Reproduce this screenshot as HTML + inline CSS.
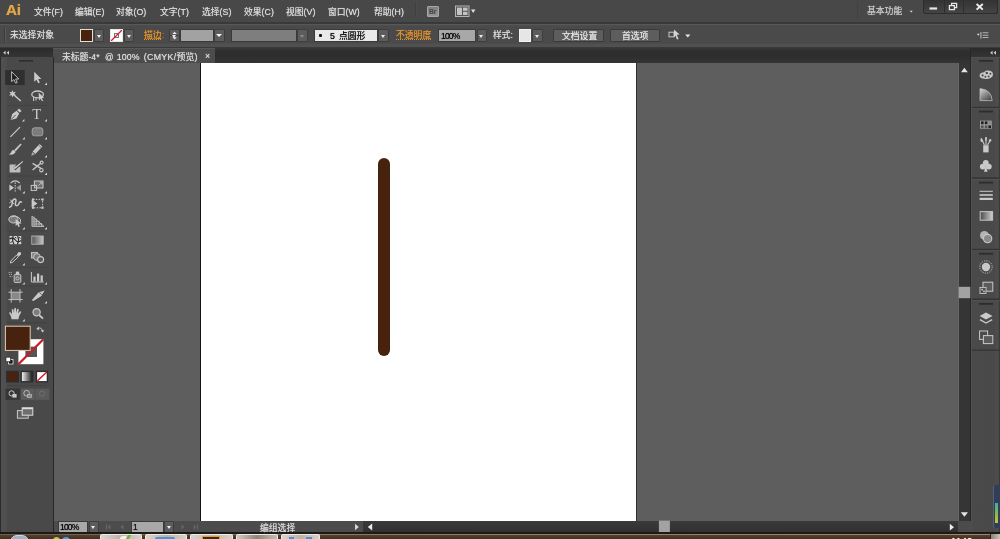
<!DOCTYPE html>
<html lang="zh-CN">
<head>
<meta charset="utf-8">
<title>未标题-4* @ 100% (CMYK/预览)</title>
<style>
*{box-sizing:border-box;margin:0;padding:0}
html,body{width:1000px;height:539px;overflow:hidden;background:#343434}
body{position:relative;font-family:"Liberation Sans","Noto Sans CJK SC",sans-serif;font-size:8.8px;color:#d8d8d8;line-height:1}
.a{position:absolute}
.t{position:absolute;white-space:nowrap;line-height:12px;height:12px;will-change:transform;text-shadow:0 0 0.7px currentColor}
#menubar{left:0;top:0;width:1000px;height:22px;background:#484848}
#ctrl{left:0;top:22px;width:1000px;height:24.8px;background:linear-gradient(#3a3a3a 0,#393939 1.6px,#585858 1.9px,#575757 3.2px,#4a4a4a 3.6px,#4a4a4a 21.4px,#515151 21.8px,#505050 24.8px)}
#tabbar{left:0;top:46.8px;width:1000px;height:15.7px;background:linear-gradient(#3b3b3b 0,#2f2f2f 4px,#2d2d2d 8px,#343434 16px)}
#tab{left:53.4px;top:48px;width:161.4px;height:14.5px;background:#4c4c4c;border-top:1px solid #585858}
#tools{left:0;top:56.5px;width:53.8px;height:477px;background:linear-gradient(90deg,#2a2a2a 0,#2c2c2c 0.9px,#505050 1.3px,#4e4e4e 6.8px,#494949 7.4px);border-right:1.7px solid #282828}
#canvas{left:53px;top:62.5px;width:905px;height:458px;background:#5e5e5e}
#art{left:199.9px;top:62.5px;width:437.2px;height:458px;background:#fff;border-left:1.1px solid #141414;border-right:1.3px solid #303030}
#vscroll{left:957.6px;top:62.5px;width:13.4px;height:458px;background:#353535;border-left:0.8px solid #666}
#rpanel{left:970.4px;top:48px;width:29.6px;height:486px;background:linear-gradient(90deg,#515151 0,#4a4a4a 1.5px,#494949 24px,#4d4d4d 25px,#4c4c4c 27.4px,#3a3a3a 28px);border-left:1.5px solid #272727}
#status{left:53.8px;top:520.5px;width:916.6px;height:12px;background:#4c4c4c}
#hscroll{left:363px;top:520.5px;width:595.4px;height:12px;background:linear-gradient(#3a3a3a,#303030)}
#taskbar{left:0;top:532px;width:1000px;height:7px;background:#3a2e24}
.or{color:#e0902c}
.fld{position:absolute;background:#a3a3a3;border:1px solid #3a3a3a}
.dd{position:absolute;background:#5c5c5c;border:1px solid #3d3d3d;border-radius:1px}
.dd:after{content:"";position:absolute;left:50%;top:50%;margin:-0.8px 0 0 -2.5px;border:2.5px solid transparent;border-top:3px solid #ececec;border-bottom:0}
.dd.dim:after{border-top-color:#8a8a8a}
.dd.big:after{margin:-1.2px 0 0 -3px;border-width:3px;border-top-width:3.6px;border-top-color:#f4f4f4}
.tb{top:534.2px;height:6px;background:linear-gradient(90deg,#dad6ce,#b9b2a6 50%,#d6d2ca);border:1px solid #efece6;border-bottom:0;border-radius:2px 2px 0 0}
.btn{position:absolute;background:#5d5d5d;border:1px solid #3a3a3a;border-radius:1px;text-align:center;color:#e4e4e4}
</style>
</head>
<body>
<div class="a" id="menubar"></div>
<div class="a" id="ctrl"></div>
<div class="a" id="tabbar"></div>
<div class="a" id="tab"></div>
<div class="a" id="canvas"></div>
<div class="a" id="art"></div>
<div class="a" id="tools"></div>
<div class="a" id="vscroll"></div>
<div class="a" id="rpanel"></div>
<div class="a" id="status"></div>
<div class="a" id="hscroll"></div>
<div class="a" id="taskbar"></div>


<!-- left toolbar -->
<div class="a" style="left:0;top:48px;width:53px;height:9px;background:linear-gradient(#2b2b2b,#353535)"></div>
<svg class="a" style="left:0;top:48px;will-change:transform" width="53" height="486" viewBox="0 48 53 486">
 <!-- collapse arrows -->
 <path d="M3.2 52.8 L5.6 50.8 L5.6 54.8Z M6.6 52.8 L9 50.8 L9 54.8Z" fill="#cfcfcf"/>
 <!-- grip -->
 <rect x="19" y="60" width="14" height="1.6" fill="#2e2e2e"/>
 <!-- separators -->
 <g stroke="#424242" stroke-width="1">
  <line x1="7" y1="105.5" x2="47" y2="105.5"/><line x1="7" y1="176" x2="47" y2="176"/>
  <line x1="7" y1="231" x2="47" y2="231"/><line x1="7" y1="267.5" x2="47" y2="267.5"/>
  <line x1="7" y1="286" x2="47" y2="286"/><line x1="7" y1="322.7" x2="47" y2="322.7"/>
  <line x1="7" y1="385.5" x2="47" y2="385.5"/>
 </g>
 <!-- row1 -->
 <rect x="5.2" y="70" width="19.5" height="15" fill="#2f2f2f"/>
 <path d="M11.6 71.6 L11.6 81.6 L13.9 79.6 L15.6 83.2 L17.2 82.5 L15.6 79 L18.8 79Z" fill="#1e1e1e" stroke="#c9c9c9" stroke-width="0.9" stroke-linejoin="round"/>
 <path d="M34.2 71.8 L34.2 81.8 L36.5 79.8 L38.2 83.3 L39.8 82.6 L38.2 79.1 L41.4 79.1Z" fill="#c9c9c9"/>
 <path d="M44.6 85 L47.0 85 L47.0 82.6Z" fill="#d6d6d6"/>
 <!-- row2 magic wand / lasso -->
 <path d="M12.4 90 L13.3 92.3 L15.8 91.7 L14.4 93.7 L16 95.6 L13.5 95.3 L12.6 97.6 L11.6 95.3 L9 95.6 L10.8 93.7 L9.2 91.8 L11.6 92.3Z" fill="#c9c9c9"/>
 <line x1="14" y1="95" x2="20.8" y2="101" stroke="#c9c9c9" stroke-width="1.5"/>
 <ellipse cx="37.6" cy="94.4" rx="5.8" ry="3.4" fill="none" stroke="#c9c9c9" stroke-width="1.3"/>
 <path d="M33.6 96.5 L33.6 101 M36 97.6 L36 100.4" stroke="#c9c9c9" stroke-width="1.1"/>
 <path d="M38.6 92.6 L39 100.6 L40.6 98.8 L42 101.2 L43.2 100.5 L41.8 98.2 L44 97.8Z" fill="#c9c9c9"/>
 <!-- row3 pen / T -->
 <path d="M19 108.4 L21.6 111 L19.8 112.6 L17.2 110.2Z" fill="#c9c9c9"/>
 <path d="M16.6 110.8 L19.2 113.4 L16.4 118.4 L10.6 120 L12.2 114Z" fill="#c9c9c9"/>
 <line x1="11" y1="119.6" x2="15.6" y2="115" stroke="#4a4a4a" stroke-width="0.9"/>
 <text x="32.2" y="119.4" font-family="Liberation Serif,serif" font-size="14.6" fill="#c9c9c9">T</text>
 <path d="M22 121.5 L24.4 121.5 L24.4 119.1Z" fill="#d6d6d6"/><path d="M44.6 121.5 L47.0 121.5 L47.0 119.1Z" fill="#d6d6d6"/>
 <!-- row4 line / rounded rect -->
 <line x1="10.4" y1="136.8" x2="20" y2="127.2" stroke="#c9c9c9" stroke-width="1.2"/>
 <rect x="32.2" y="127.8" width="10.6" height="8" rx="2.2" fill="#7c7c7c" stroke="#a2a2a2" stroke-width="1"/>
 <path d="M22.4 139.5 L24.799999999999997 139.5 L24.799999999999997 137.1Z" fill="#d6d6d6"/><path d="M44.6 139.5 L47.0 139.5 L47.0 137.1Z" fill="#d6d6d6"/>
 <!-- row5 brush / pencil -->
 <path d="M20.6 143.6 L21.6 144.6 L15.6 151.4 L14.2 150Z" fill="#c9c9c9"/>
 <path d="M14 150.2 Q15.6 151 15.4 152.6 Q13.6 155.6 8.6 154.2 Q11.4 153.4 11.6 151.2 Q12.4 149.8 14 150.2Z" fill="#c9c9c9"/>
 <path d="M39.6 144 L42.4 146.6 L35.4 154 L32.6 151.4Z" fill="#c9c9c9"/>
 <path d="M32.2 152 L34.8 154.4 L31.2 155.8Z" fill="#a8a8a8"/>
 <line x1="38.6" y1="145.2" x2="41.4" y2="147.8" stroke="#4a4a4a" stroke-width="0.7"/>
 <path d="M44.6 157.5 L47.0 157.5 L47.0 155.1Z" fill="#d6d6d6"/>
 <!-- row6 blob / scissors -->
 <path d="M9.6 164.4 L16.4 164.4 L13 168 L15.4 170.2 L19 167 L20.4 166.6 L20.4 172.4 L9.6 172.4Z" fill="#bdbdbd"/>
 <path d="M22.6 161 L23.2 161.8 L17.4 167 Q15.4 169.8 12.4 168.6 Q14.6 166.4 16.4 166Z" fill="#c9c9c9"/>
 <path d="M32.6 163.4 L41.4 168.6 M32.6 170 L41 163" stroke="#c9c9c9" stroke-width="1.4"/>
 <circle cx="41.4" cy="170.2" r="1.7" fill="none" stroke="#c9c9c9" stroke-width="1.1"/>
 <circle cx="41.6" cy="162.6" r="1.5" fill="none" stroke="#c9c9c9" stroke-width="1.1"/>
 <path d="M44.6 175 L47.0 175 L47.0 172.6Z" fill="#d6d6d6"/>
 <!-- row7 reflect / scale -->
 <path d="M9.4 184.6 L14 187.8 L9.4 191Z" fill="#c9c9c9"/>
 <path d="M21 184.6 L16.4 187.8 L21 191Z" fill="#9a9a9a"/>
 <line x1="15.2" y1="182.4" x2="15.2" y2="191.6" stroke="#c9c9c9" stroke-width="1" stroke-dasharray="1.6 1"/>
 <path d="M10.6 183.2 Q15.2 178.6 19.8 183.2" fill="none" stroke="#c9c9c9" stroke-width="1.1"/>
 <rect x="34.4" y="181" width="8.6" height="7" fill="#6e6e6e" stroke="#c9c9c9" stroke-width="1"/>
 <rect x="31.2" y="185.4" width="5.4" height="5" fill="none" stroke="#c9c9c9" stroke-width="1"/>
 <path d="M38.6 185.6 L41.8 182.4 M39.6 182.2 L42 182.2 L42 184.6" fill="none" stroke="#c9c9c9" stroke-width="0.9"/>
 <path d="M22.4 193.5 L24.799999999999997 193.5 L24.799999999999997 191.1Z" fill="#d6d6d6"/><path d="M44.6 193.5 L47.0 193.5 L47.0 191.1Z" fill="#d6d6d6"/>
 <!-- row8 width/warp / free transform -->
 <path d="M9 207.4 Q12 206.8 12.2 203 Q12.4 199.4 14.6 199 Q16.8 199 15.6 202.4 Q14.6 206 17 205.6 Q19 205 19.4 202.6 Q20.4 200.8 21.8 202.6" fill="none" stroke="#c9c9c9" stroke-width="1.5"/>
 <path d="M9.4 203 L12.8 200.2 M10.4 199.6 L13.8 204" stroke="#c9c9c9" stroke-width="1"/>
 <rect x="33" y="199.4" width="9.6" height="8.4" fill="none" stroke="#c9c9c9" stroke-width="1" stroke-dasharray="1.5 1.3"/>
 <g fill="#c9c9c9"><rect x="32" y="198.4" width="2.2" height="2.2"/><rect x="41.4" y="198.4" width="2.2" height="2.2"/><rect x="32" y="206.6" width="2.2" height="2.2"/><rect x="41.4" y="206.6" width="2.2" height="2.2"/></g>
 <path d="M31.6 199.4 L31.6 207.6 L37.4 203.6Z" fill="#c9c9c9"/>
 <path d="M22.4 211 L24.799999999999997 211 L24.799999999999997 208.6Z" fill="#d6d6d6"/>
 <!-- row9 shape builder / perspective -->
 <ellipse cx="13.4" cy="219.4" rx="4.6" ry="3.6" fill="#7a7a7a" stroke="#c9c9c9" stroke-width="1"/>
 <path d="M11 217 Q15 214.6 19 217.6 Q21.4 220 20.4 222.4" fill="none" stroke="#c9c9c9" stroke-width="1"/>
 <path d="M15.6 219 L21.6 223.6 L18.8 223.8 L19.8 226.6 L18.4 227 L17.4 224.4 L15.6 226Z" fill="#c9c9c9"/>
 <path d="M32 216 L32 226.4 L44 226.4 Z" fill="none" stroke="#c9c9c9" stroke-width="0.9"/>
 <path d="M34.2 216.8 L34.2 226.4 M36.6 218.6 L36.6 226.4 M39 220.6 L39 226.4 M41.4 223 L41.4 226.4 M32 219 L35.4 219 M32 221.6 L38.6 221.6 M32 224 L41.6 224" stroke="#c9c9c9" stroke-width="0.8"/>
 <path d="M32 216 L36.4 219.6 L36.4 226.4 L32 226.4Z" fill="#9c9c9c" opacity="0.7"/>
 <path d="M22.4 229.5 L24.799999999999997 229.5 L24.799999999999997 227.1Z" fill="#d6d6d6"/><path d="M44.6 229.5 L47.0 229.5 L47.0 227.1Z" fill="#d6d6d6"/>
 <!-- row10 mesh / gradient -->
 <rect x="9.6" y="236" width="11.6" height="8.2" fill="#d2d2d2"/>
 <path d="M9.6 239 Q13 236.6 15.4 240 Q18 243.4 21.2 240.4 M13.2 236 Q11.6 240 14 244.2 M17.6 236 Q19.6 240 17.4 244.2" fill="none" stroke="#2c2c2c" stroke-width="1.2"/>
 <path d="M10.4 242.6 L12.4 241.4 M19 237.4 L20.6 238.4 M15 237.2 L16.4 238.2" stroke="#2c2c2c" stroke-width="1"/>
 <defs><linearGradient id="g1" x1="0" x2="1" y1="0" y2="0"><stop offset="0" stop-color="#555"/><stop offset="1" stop-color="#c4c4c4"/></linearGradient>
 <linearGradient id="g2" x1="0" x2="1" y1="0" y2="0"><stop offset="0" stop-color="#fff"/><stop offset="1" stop-color="#111"/></linearGradient></defs>
 <rect x="31.8" y="236" width="11.4" height="8.2" fill="url(#g1)" stroke="#b8b8b8" stroke-width="0.9"/>
 <!-- row11 eyedropper / blend -->
 <path d="M18.4 252.2 Q20.4 251.6 21.2 253.2 Q21.4 254.6 19.8 255.6 L18.8 256.4 L16.8 254.4 Z" fill="#c9c9c9"/>
 <path d="M16.6 255 L18.4 256.8 L12.4 262.4 L10.4 263 L10.8 261Z" fill="none" stroke="#c9c9c9" stroke-width="1"/>
 <rect x="31.4" y="252.4" width="6" height="5.6" fill="#8a8a8a" stroke="#c9c9c9" stroke-width="0.9"/>
 <circle cx="37" cy="257" r="3.4" fill="#777" stroke="#c9c9c9" stroke-width="0.9"/>
 <circle cx="40.6" cy="259.6" r="3" fill="#5a5a5a" stroke="#c9c9c9" stroke-width="1.1"/>
 <path d="M22.4 265.5 L24.799999999999997 265.5 L24.799999999999997 263.1Z" fill="#d6d6d6"/>
 <!-- row12 symbol sprayer / graph -->
 <rect x="14.2" y="274.6" width="6.6" height="7.8" rx="0.8" fill="#6a6a6a" stroke="#c9c9c9" stroke-width="1"/>
 <rect x="15.8" y="271.6" width="3.4" height="2.6" fill="#c9c9c9"/>
 <circle cx="17.5" cy="278.4" r="1.6" fill="none" stroke="#c9c9c9" stroke-width="0.9"/>
 <path d="M8.6 272.4 L12.4 272.4 M9 274.4 L12 274.4 M9.6 276.6 L12.4 276.6" stroke="#c9c9c9" stroke-width="0.8" stroke-dasharray="1.2 0.8"/>
 <path d="M31.4 272 L31.4 282 L43.6 282" fill="none" stroke="#c9c9c9" stroke-width="1"/>
 <rect x="33.4" y="276.6" width="2.2" height="5" fill="#c9c9c9"/><rect x="37" y="273.6" width="2.2" height="8" fill="#c9c9c9"/><rect x="40.6" y="275.4" width="2.2" height="6.2" fill="#c9c9c9"/>
 <path d="M22.4 284.6 L24.799999999999997 284.6 L24.799999999999997 282.20000000000005Z" fill="#d6d6d6"/><path d="M44.6 284.6 L47.0 284.6 L47.0 282.20000000000005Z" fill="#d6d6d6"/>
 <!-- row13 artboard / slice -->
 <rect x="11.4" y="292.4" width="8.4" height="7" fill="#888"/>
 <path d="M8.4 292.2 L22.8 292.2 M8.4 299.6 L22.8 299.6 M11.2 289 L11.2 302.6 M20 289 L20 302.6" stroke="#c9c9c9" stroke-width="0.9"/>
 <path d="M44.6 290.4 L41.4 296 L33.4 301 L31.8 300.2 L38.4 292.6 Z" fill="#c9c9c9"/>
 <path d="M39.4 292.6 L41.8 294.6" stroke="#4a4a4a" stroke-width="0.8"/>
 <path d="M44.6 303.5 L47.0 303.5 L47.0 301.1Z" fill="#d6d6d6"/>
 <!-- row14 hand / zoom -->
 <path d="M11.6 319.2 L11 316.4 L9 312.8 Q9.6 311.6 10.8 312.6 L12 314.6 L11.8 309.6 Q12.6 308.6 13.4 309.6 L13.8 313 L14.4 308.2 Q15.4 307.4 16 308.4 L16 313 L17.2 309 Q18.2 308.4 18.8 309.4 L18 313.8 L19.8 311.4 Q20.8 311 21.2 312 L19 316.6 L18.4 319.2Z" fill="#c9c9c9"/>
 <circle cx="36.6" cy="312.2" r="3.6" fill="#7e7e7e" stroke="#c9c9c9" stroke-width="1.2"/>
 <line x1="39.2" y1="315" x2="43" y2="318.6" stroke="#c9c9c9" stroke-width="1.8"/>
 <path d="M22.4 321.4 L24.799999999999997 321.4 L24.799999999999997 319.0Z" fill="#d6d6d6"/>
 <!-- fill / stroke -->
 <rect x="18.4" y="339.2" width="25" height="25" fill="#fff"/>
 <rect x="25.4" y="346.6" width="11.6" height="10.4" fill="#555"/>
 <line x1="18.4" y1="364.2" x2="43.4" y2="339.2" stroke="#c4202c" stroke-width="2.3"/>
 <rect x="5.4" y="326.2" width="24.8" height="24.2" fill="#46220f" stroke="#e2cdb8" stroke-width="1"/>
 <path d="M37.4 328.4 Q41.6 327 42.6 331" fill="none" stroke="#c9c9c9" stroke-width="1"/>
 <path d="M36.4 328.8 L38.8 326.6 L38.8 330.4Z M42.6 332.6 L40.8 330.2 L44.4 330.2Z" fill="#c9c9c9"/>
 <rect x="8.4" y="359.4" width="4.6" height="4.6" fill="#111" stroke="#e8e8e8" stroke-width="0.8"/>
 <rect x="6" y="357.2" width="4.4" height="4.4" fill="#fff" stroke="#222" stroke-width="0.6"/>
 <!-- color mode buttons -->
 <rect x="6.8" y="371.4" width="11.4" height="10.4" fill="#46220f" stroke="#2e2e2e" stroke-width="1.4"/>
 <rect x="21.2" y="371.4" width="11.6" height="10.4" fill="url(#g2)" stroke="#2e2e2e" stroke-width="1.4"/>
 <rect x="36.4" y="371.4" width="11" height="10.4" fill="#fff" stroke="#2e2e2e" stroke-width="1.4"/>
 <line x1="37" y1="381.2" x2="46.8" y2="372" stroke="#cc1f2d" stroke-width="1.5"/>
 <!-- draw modes -->
 <rect x="5.6" y="388.6" width="14.6" height="11.2" fill="#363636"/>
 <rect x="20.8" y="388.6" width="13.8" height="11.2" fill="#5c5c5c"/>
 <rect x="35.2" y="388.6" width="14.2" height="11.2" fill="#5a5a5a"/>
 <circle cx="11.6" cy="393.4" r="2.6" fill="none" stroke="#c9c9c9" stroke-width="1"/><rect x="12.4" y="394" width="4.2" height="3.6" fill="#c9c9c9"/>
 <circle cx="26.6" cy="393.2" r="2.8" fill="none" stroke="#bdbdbd" stroke-width="1"/><rect x="27.6" y="394.4" width="4" height="3.2" fill="#8a8a8a" stroke="#bdbdbd" stroke-width="0.7"/>
 <circle cx="42" cy="393.6" r="2.6" fill="none" stroke="#6e6e6e" stroke-width="1"/>
 <!-- screen mode -->
 <rect x="17.4" y="410.6" width="10.8" height="7.6" fill="#606060" stroke="#c9c9c9" stroke-width="1"/>
 <rect x="22.2" y="407.8" width="10.6" height="7.4" fill="#6e6e6e" stroke="#dedede" stroke-width="1"/>
 <rect x="22.2" y="407.8" width="10.6" height="1.4" fill="#dedede"/>
</svg>


<!-- right panel -->
<div class="a" style="left:971px;top:48px;width:29px;height:9.3px;background:linear-gradient(#2b2b2b,#353535)"></div>
<svg class="a" style="left:958px;top:48px" width="42" height="486" viewBox="958 48 42 486">
 <path d="M990.2 52.8 L992.6 50.8 L992.6 54.8Z M993.6 52.8 L996 50.8 L996 54.8Z" fill="#cfcfcf"/>
 <!-- group separators -->
 <g fill="#333"><rect x="972" y="106.8" width="28" height="1.5"/><rect x="972" y="177.4" width="28" height="1.5"/><rect x="972" y="248.8" width="28" height="1.5"/><rect x="972" y="298.6" width="28" height="1.5"/><rect x="972" y="349.6" width="28" height="1.2"/></g>
 <g fill="#555"><rect x="972" y="57.3" width="28" height="0.8"/><rect x="972" y="108.3" width="28" height="0.8"/><rect x="972" y="178.9" width="28" height="0.8"/><rect x="972" y="250.3" width="28" height="0.8"/><rect x="972" y="300.1" width="28" height="0.8"/></g>
 <!-- grips -->
 <g fill="#2c2c2c"><rect x="979" y="60" width="14" height="1.7"/><rect x="979" y="110.7" width="14" height="1.7"/><rect x="979" y="181.8" width="14" height="1.7"/><rect x="979" y="252.9" width="14" height="1.7"/><rect x="979" y="303" width="14" height="1.7"/></g>
 <!-- scroll arrows/thumb -->
 <path d="M961 72.3 L967.8 72.3 L964.4 67.8Z" fill="#e4e4e4"/>
 <path d="M960.8 512.3 L968 512.3 L964.4 516.8Z" fill="#e4e4e4"/>
 <rect x="958.7" y="286.8" width="11.6" height="11.4" fill="#a2a2a2"/>
 <!-- palette -->
 <path d="M987.4 70.6 Q993 70.8 993 74.4 Q992.6 78.8 985.6 79 Q979.4 78.8 979.6 75.6 Q979.8 73 983 72.6 Q984.6 72.6 984.8 71.6 Q985.4 70.6 987.4 70.6Z" fill="#c9c9c9"/>
 <g fill="#4a4a4a"><circle cx="982.6" cy="75.4" r="1.1"/><circle cx="985.4" cy="76.8" r="1"/><circle cx="988.6" cy="76.4" r="1"/><circle cx="990.4" cy="73.8" r="1"/><circle cx="986.8" cy="73" r="1.2"/></g>
 <!-- color guide -->
 <defs><linearGradient id="rg1" x1="0" y1="0" x2="0.8" y2="1"><stop offset="0" stop-color="#d8d8d8"/><stop offset="1" stop-color="#444"/></linearGradient>
 <linearGradient id="rg2" x1="0" x2="1" y1="0" y2="0"><stop offset="0" stop-color="#4a4a4a"/><stop offset="1" stop-color="#cfcfcf"/></linearGradient></defs>
 <path d="M980 88.6 Q991.4 89.6 992.2 100.6 L980 100.6Z" fill="url(#rg1)" stroke="#bdbdbd" stroke-width="0.8"/>
 <!-- swatches -->
 <rect x="980" y="120.6" width="11.8" height="8.2" fill="#9c9c9c"/>
 <g fill="#1e1e1e"><rect x="981" y="121.4" width="2.6" height="2.8"/><rect x="984.8" y="121.4" width="2.6" height="2.8"/><rect x="988.4" y="125.4" width="2.6" height="2.8"/></g>
 <g fill="#555"><rect x="988.4" y="121.4" width="2.6" height="2.8" fill="#8a8a8a"/><rect x="981" y="125.4" width="2.6" height="2.8"/><rect x="984.8" y="125.4" width="2.6" height="2.8"/></g>
 <!-- brushes -->
 <rect x="983.2" y="145.2" width="5.4" height="7.2" fill="#c9c9c9"/>
 <path d="M984.4 145 L982 139.6 M986 145 L986 138 M987.6 145 L990.4 140" stroke="#c9c9c9" stroke-width="1.1"/>
 <path d="M981 137.6 Q983.2 139.4 982.8 141.8 L981 142 Q980 139.6 981 137.6Z M985.2 137 L986.8 137 L986.8 140.6 L985.2 140.6Z M989.6 139 Q991.8 138.6 991.4 140.8 L989.6 142.2 L988.6 141Z" fill="#c9c9c9"/>
 <!-- symbols (club) -->
 <circle cx="985.8" cy="163" r="2.9" fill="#c9c9c9"/><circle cx="982.8" cy="166.6" r="2.9" fill="#c9c9c9"/><circle cx="988.8" cy="166.6" r="2.9" fill="#c9c9c9"/>
 <path d="M985.8 165 L987.6 171.8 L984 171.8Z" fill="#c9c9c9"/>
 <!-- stroke -->
 <rect x="979.6" y="190.8" width="13.2" height="1" fill="#c9c9c9"/><rect x="979.6" y="194.2" width="13.2" height="1.6" fill="#c9c9c9"/><rect x="979.6" y="197.8" width="13.2" height="2.2" fill="#c9c9c9"/>
 <!-- gradient -->
 <rect x="980.2" y="211.6" width="12.4" height="8.6" fill="url(#rg2)" stroke="#c4c4c4" stroke-width="1"/>
 <!-- transparency -->
 <circle cx="984.4" cy="235.4" r="4.4" fill="#b4b4b4"/>
 <circle cx="987.6" cy="238.6" r="4.2" fill="#8a8a8a" stroke="#c9c9c9" stroke-width="1.1"/>
 <!-- appearance -->
 <circle cx="986" cy="267" r="4.2" fill="#c9c9c9"/>
 <circle cx="986" cy="267" r="6.2" fill="none" stroke="#c9c9c9" stroke-width="0.9" stroke-dasharray="1.2 1.2"/>
 <!-- graphic styles -->
 <rect x="983" y="282.2" width="9.8" height="9" fill="#5c5c5c" stroke="#c9c9c9" stroke-width="1"/>
 <rect x="980" y="287.4" width="6" height="6" fill="#4a4a4a" stroke="#c9c9c9" stroke-width="0.9"/>
 <rect x="981.4" y="288.8" width="1.6" height="1.6" fill="#c9c9c9"/><rect x="983.2" y="290.6" width="1.6" height="1.6" fill="#c9c9c9"/>
 <!-- layers -->
 <path d="M986 312.4 L992.6 316 L986 319.6 L979.6 316Z" fill="#c9c9c9"/>
 <path d="M980 319.6 L986 323 L992.2 319.6" fill="none" stroke="#c9c9c9" stroke-width="1.4"/>
 <!-- artboards -->
 <rect x="979.6" y="331" width="8" height="8.4" fill="#4a4a4a" stroke="#c9c9c9" stroke-width="1"/>
 <rect x="983.4" y="335.6" width="9.4" height="8" fill="#5a5a5a" stroke="#c9c9c9" stroke-width="1"/>
</svg>
<!-- gadget at right edge -->
<div class="a" style="left:992.5px;top:485px;width:8px;height:42.5px;background:#323e58;border-radius:2px 0 0 2px;border-left:1px solid #55607a"></div>
<div class="a" style="left:994.6px;top:503px;width:3px;height:20px;background:linear-gradient(#3bb0a8,#86b84a 50%,#c8c040)"></div>

<!-- status bar widgets -->
<div class="a" style="left:958.4px;top:520.5px;width:12.2px;height:12px;background:#4b4b4b"></div>
<div class="fld" style="left:57.5px;top:521.2px;width:30.8px;height:11.4px;background:#a8a8a8"></div>
<div class="t" style="left:60.3px;top:521.4px;color:#0c0c0c;font-size:8.6px;letter-spacing:-0.85px">100%</div>
<div class="dd" style="left:88.5px;top:521.2px;width:10.7px;height:11.4px"></div>
<div class="fld" style="left:130.5px;top:521.2px;width:33px;height:11.4px;background:#a8a8a8"></div>
<div class="t" style="left:133.4px;top:521px;color:#161616;font-size:8.4px">1</div>
<div class="dd" style="left:163.8px;top:521.2px;width:10.7px;height:11.4px"></div>
<svg class="a" style="left:100px;top:520px" width="110" height="13" viewBox="100 520 110 13">
 <g fill="#636363"><rect x="106" y="524.2" width="1.2" height="5.4"/><path d="M107.6 527 L110.6 524.2 L110.6 529.8Z"/><path d="M120.4 527 L123.6 524.2 L123.6 529.8Z"/>
 <path d="M184.6 527 L181.4 524.2 L181.4 529.8Z"/><path d="M196.6 527 L193.6 524.2 L193.6 529.8Z"/><rect x="197" y="524.2" width="1.2" height="5.4"/></g>
</svg>
<svg class="a" style="left:350px;top:520px" width="620" height="13" viewBox="350 520 620 13">
 <path d="M355 523.8 L355 530.2 L358.8 527Z" fill="#d8d8d8"/>
 <path d="M372.2 523.6 L372.2 530.4 L367.8 527Z" fill="#ececec"/>
 <path d="M949.8 523.8 L949.8 530.6 L954 527.2Z" fill="#ececec"/>
 <rect x="658.9" y="520.6" width="11" height="11.6" fill="#a2a2a2"/>
</svg>

<!-- taskbar -->
<div class="a" style="left:0;top:532px;width:1000px;height:1.6px;background:#1c1a18"></div>
<div class="a" style="left:0;top:533.6px;width:1000px;height:1px;background:linear-gradient(90deg,#6e5d4a,#8a7863 30%,#9a8873)"></div>
<div class="a" style="left:0;top:534.6px;width:1000px;height:4.4px;background:linear-gradient(#54412e,#3e3023)"></div>
<div class="a" style="left:10.4px;top:535.2px;width:18.6px;height:14px;border-radius:9px;background:#9fb2c6;border:1px solid #cfd8e2"></div>
<div class="a" style="left:52.8px;top:537.2px;width:7.4px;height:7px;border-radius:4px;background:#b4d12a"></div>
<div class="a" style="left:61.6px;top:536.8px;width:8.8px;height:8px;border-radius:4.4px;background:#3ea6dc"></div>
<div class="a tb" style="left:100px;width:41.8px"></div>
<div class="a" style="left:120px;top:536px;width:8px;height:5px;background:#eef2ea;border-radius:3px 3px 0 0"></div>
<div class="a" style="left:126.5px;top:535.4px;width:3px;height:4px;background:#69b43c;transform:skewX(-30deg)"></div>
<div class="a tb" style="left:144.8px;width:42.6px"></div>
<div class="a" style="left:155px;top:536.6px;width:20px;height:3px;background:#4c93d6;border-radius:2px 2px 0 0"></div>
<div class="a tb" style="left:190.4px;width:42.6px;background:linear-gradient(90deg,#d8d4cc,#c0b8aa 50%,#d8d4cc)"></div>
<div class="a" style="left:201.6px;top:536.4px;width:18.6px;height:4px;background:#3a2a18;border:1.2px solid #e89a2c;border-bottom:0"></div>
<div class="a tb" style="left:236px;width:41.8px;background:linear-gradient(90deg,#cfcac0,#8e8676 50%,#c4beb2)"></div>
<div class="a tb" style="left:281.2px;width:38.6px"></div>
<div class="a" style="left:289px;top:537px;width:5px;height:3px;background:#4c8fd0"></div>
<div class="a" style="left:306px;top:537px;width:5.6px;height:3px;background:#4c8fd0"></div>
<div class="a" style="left:989.6px;top:534px;width:10.4px;height:5px;background:linear-gradient(90deg,#8a8378,#c9c4ba);border-left:1px solid #2e261e"></div>
<div class="t" style="left:951px;top:535.7px;color:#fff;font-size:9.5px;line-height:10px;letter-spacing:0.3px">1140</div>

<!-- stroke -->
<div class="a" style="left:377.9px;top:158.1px;width:12.1px;height:198.4px;background:#46220f;border-radius:6.05px"></div>

<!-- menubar -->
<div class="t" style="left:6px;top:1px;font-size:15.2px;font-weight:bold;color:#e3a548;line-height:18px;height:18px;letter-spacing:-0.3px">Ai</div>
<div class="t" style="left:34px;top:6px">文件(F)</div>
<div class="t" style="left:75px;top:6px">编辑(E)</div>
<div class="t" style="left:116px;top:6px">对象(O)</div>
<div class="t" style="left:160px;top:6px">文字(T)</div>
<div class="t" style="left:202px;top:6px">选择(S)</div>
<div class="t" style="left:244px;top:6px">效果(C)</div>
<div class="t" style="left:286px;top:6px">视图(V)</div>
<div class="t" style="left:328px;top:6px">窗口(W)</div>
<div class="t" style="left:374px;top:6px">帮助(H)</div>
<div class="t" style="left:867px;top:4.8px;color:#c6c6c6">基本功能</div>


<!-- menubar widgets -->
<div class="a" style="left:415px;top:2px;height:15px;background:#404040;border-right:1px solid #4c4c4c;width:2px"></div>
<div class="a" style="left:427px;top:6px;width:12px;height:11px;background:linear-gradient(#808080,#969696);border:1px solid #a6a6a6;border-radius:1px"></div>
<div class="t" style="left:429px;top:6px;font-size:7px;font-weight:bold;color:#454545;line-height:11px;height:11px;letter-spacing:-0.2px;text-shadow:none">Br</div>
<svg class="a" style="left:455px;top:5px" width="22" height="13" viewBox="0 0 22 13">
 <rect x="0.5" y="1" width="13.5" height="10.5" fill="#555" stroke="#b4b4b4" stroke-width="1"/>
 <rect x="2" y="2.6" width="5" height="7.4" fill="#c4c4c4"/><rect x="8" y="2.6" width="4.5" height="3.2" fill="#c4c4c4"/><rect x="8" y="6.8" width="4.5" height="3.2" fill="#c4c4c4"/>
 <path d="M16 4.6 L20.4 4.6 L18.2 8Z" fill="#e0e0e0"/>
</svg>
<div class="a" style="left:857px;top:2px;width:1px;height:17px;background:#414141"></div>
<svg class="a" style="left:909px;top:10px" width="5" height="4" viewBox="0 0 5 4"><path d="M0.6 0.8 L3.8 0.8 L2.2 2.6Z" fill="#d8d8d8"/></svg>
<div class="a" style="left:922.5px;top:0;width:75.5px;height:13.5px;background:linear-gradient(#333,#444);border:1px solid #2c2c2c;border-top:0;border-radius:0 0 3px 3px"></div>
<div class="a" style="left:943.5px;top:0;width:1px;height:13px;background:#2e2e2e"></div>
<div class="a" style="left:962.5px;top:0;width:1px;height:13px;background:#2e2e2e"></div>
<svg class="a" style="left:922px;top:0" width="77" height="14" viewBox="0 0 77 14">
 <rect x="7.5" y="7.4" width="7.6" height="2.2" fill="#e8e8e8"/>
 <rect x="29.6" y="3.4" width="5" height="4.2" fill="none" stroke="#e8e8e8" stroke-width="1.3"/>
 <rect x="27.4" y="5.6" width="5" height="4" fill="#3c3c3c" stroke="#e8e8e8" stroke-width="1.3"/>
 <path d="M54.6 4 L60.8 9.6 M60.8 4 L54.6 9.6" stroke="#efefef" stroke-width="1.9"/>
</svg>
<!-- ctrl right -->
<svg class="a" style="left:668px;top:28px" width="24" height="14" viewBox="0 0 24 14">
 <rect x="1" y="4.2" width="5" height="4.6" fill="none" stroke="#c8c8c8" stroke-width="1"/>
 <path d="M6 1.4 L11.6 6.4 L8.8 6.8 L10.6 11 L9 11.6 L7.4 7.6 L6 9.4Z" fill="#d4d4d4"/>
 <path d="M17.2 6.4 L22.4 6.4 L19.8 9.6Z" fill="#e6e6e6"/>
</svg>
<svg class="a" style="left:976px;top:31px" width="14" height="9" viewBox="0 0 14 9">
 <path d="M0.8 2.8 L3.8 2.8 L2.3 4.8Z" fill="#d8d8d8"/><rect x="4.5" y="1" width="0.9" height="6.6" fill="#cdcdcd"/>
 <rect x="6.6" y="1.4" width="5.8" height="0.8" fill="#cdcdcd"/><rect x="6.6" y="3.8" width="5.8" height="0.8" fill="#cdcdcd"/><rect x="6.6" y="6.2" width="5.8" height="0.8" fill="#cdcdcd"/>
</svg>

<!-- control bar -->
<div class="t" style="left:10px;top:29px">未选择对象</div>
<div class="t or" style="left:144px;top:29px;text-decoration:underline dotted;text-decoration-thickness:0.8px;text-underline-offset:1.2px">描边<span style="opacity:.55;text-decoration:none;display:inline-block;margin-left:0.5px">:</span></div>
<div class="t or" style="left:396px;top:29px;text-decoration:underline dotted;text-decoration-thickness:0.8px;text-underline-offset:1.2px">不透明度</div>
<div class="t" style="left:493.2px;top:29px">样式:</div>


<!-- control bar widgets -->
<div class="a" style="left:4px;top:28px;width:2px;height:14px;background:#3a3a3a;border-right:1px solid #5a5a5a"></div>
<div class="a" style="left:80px;top:29px;width:13px;height:13px;background:#46220f;border:1px solid #e6dcd2"></div>
<div class="dd" style="left:94px;top:29px;width:10px;height:13px"></div>
<div class="a" style="left:110px;top:29px;width:13px;height:13px;background:#fff;border:1px solid #e8e8e8;overflow:hidden">
 <svg width="11" height="11" viewBox="0 0 11 11" style="display:block"><rect x="3.5" y="3.5" width="4" height="4" fill="none" stroke="#777" stroke-width="1"/><line x1="0" y1="11" x2="11" y2="0" stroke="#d0202c" stroke-width="1.3"/></svg>
</div>
<div class="dd" style="left:124px;top:29px;width:10px;height:13px"></div>
<div class="dd" style="left:168.5px;top:29px;width:11px;height:13px"><svg class="a" style="left:0;top:0" width="9" height="11" viewBox="0 0 9 11"><rect x="0" y="5.2" width="9" height="0.9" fill="#3a3a3a"/><path d="M2.4 4.1 L4.6 1.8 L6.8 4.1Z M2.4 7.3 L4.6 9.6 L6.8 7.3Z" fill="#ececec"/></svg></div>
<div class="fld" style="left:180px;top:29px;width:33.5px;height:13px;background:#a2a2a2"></div>
<div class="dd big" style="left:214px;top:29px;width:10.5px;height:13px"></div>
<div class="fld" style="left:230.5px;top:29px;width:66px;height:13px;background:#7e7e7e"></div>
<div class="dd dim" style="left:297px;top:29px;width:10.5px;height:13px"></div>
<div class="fld" style="left:314px;top:29px;width:64px;height:13px;background:#e9e9e9"></div>
<div class="a" style="left:319px;top:34px;width:3px;height:3px;background:#111;border-radius:1px"></div>
<div class="t" style="left:329.5px;top:29.5px;color:#111">5</div>
<div class="t" style="left:338.8px;top:29.5px;color:#111">点圆形</div>
<div class="dd" style="left:378.3px;top:29px;width:10.5px;height:13px"></div>
<div class="fld" style="left:438.2px;top:29px;width:38px;height:13px;background:#a8a8a8"></div>
<div class="t" style="left:441px;top:29.5px;color:#0c0c0c;font-size:8.6px;letter-spacing:-0.85px">100%</div>
<div class="dd" style="left:476.6px;top:29px;width:10.5px;height:13px"></div>
<div class="a" style="left:518.5px;top:29px;width:12.5px;height:13px;background:#e6e6e6;border:1px solid #f2f2f2"></div>
<div class="dd" style="left:531.5px;top:29px;width:11px;height:13px"></div>
<div class="btn" style="left:553.3px;top:28.8px;width:50.5px;height:13px"></div>
<div class="t" style="left:561.6px;top:29.5px;color:#e2e2e2">文档设置</div>
<div class="btn" style="left:610.2px;top:28.8px;width:50px;height:13px"></div>
<div class="t" style="left:622px;top:29.5px;color:#e2e2e2">首选项</div>

<!-- tab -->
<div class="t" style="left:61.6px;top:50.6px"><span>未标题-4*</span> <span style="margin-left:3px;font-size:8.4px">@</span> <span style="margin-left:0.8px;letter-spacing:0.1px">100%</span> <span style="letter-spacing:0.3px;margin-left:1.6px">(CMYK/预览)</span></div>
<div class="t" style="left:205.4px;top:50.2px">×</div>

<!-- status -->
<div class="t" style="left:260px;top:521.6px">编组选择</div>
</body>
</html>
